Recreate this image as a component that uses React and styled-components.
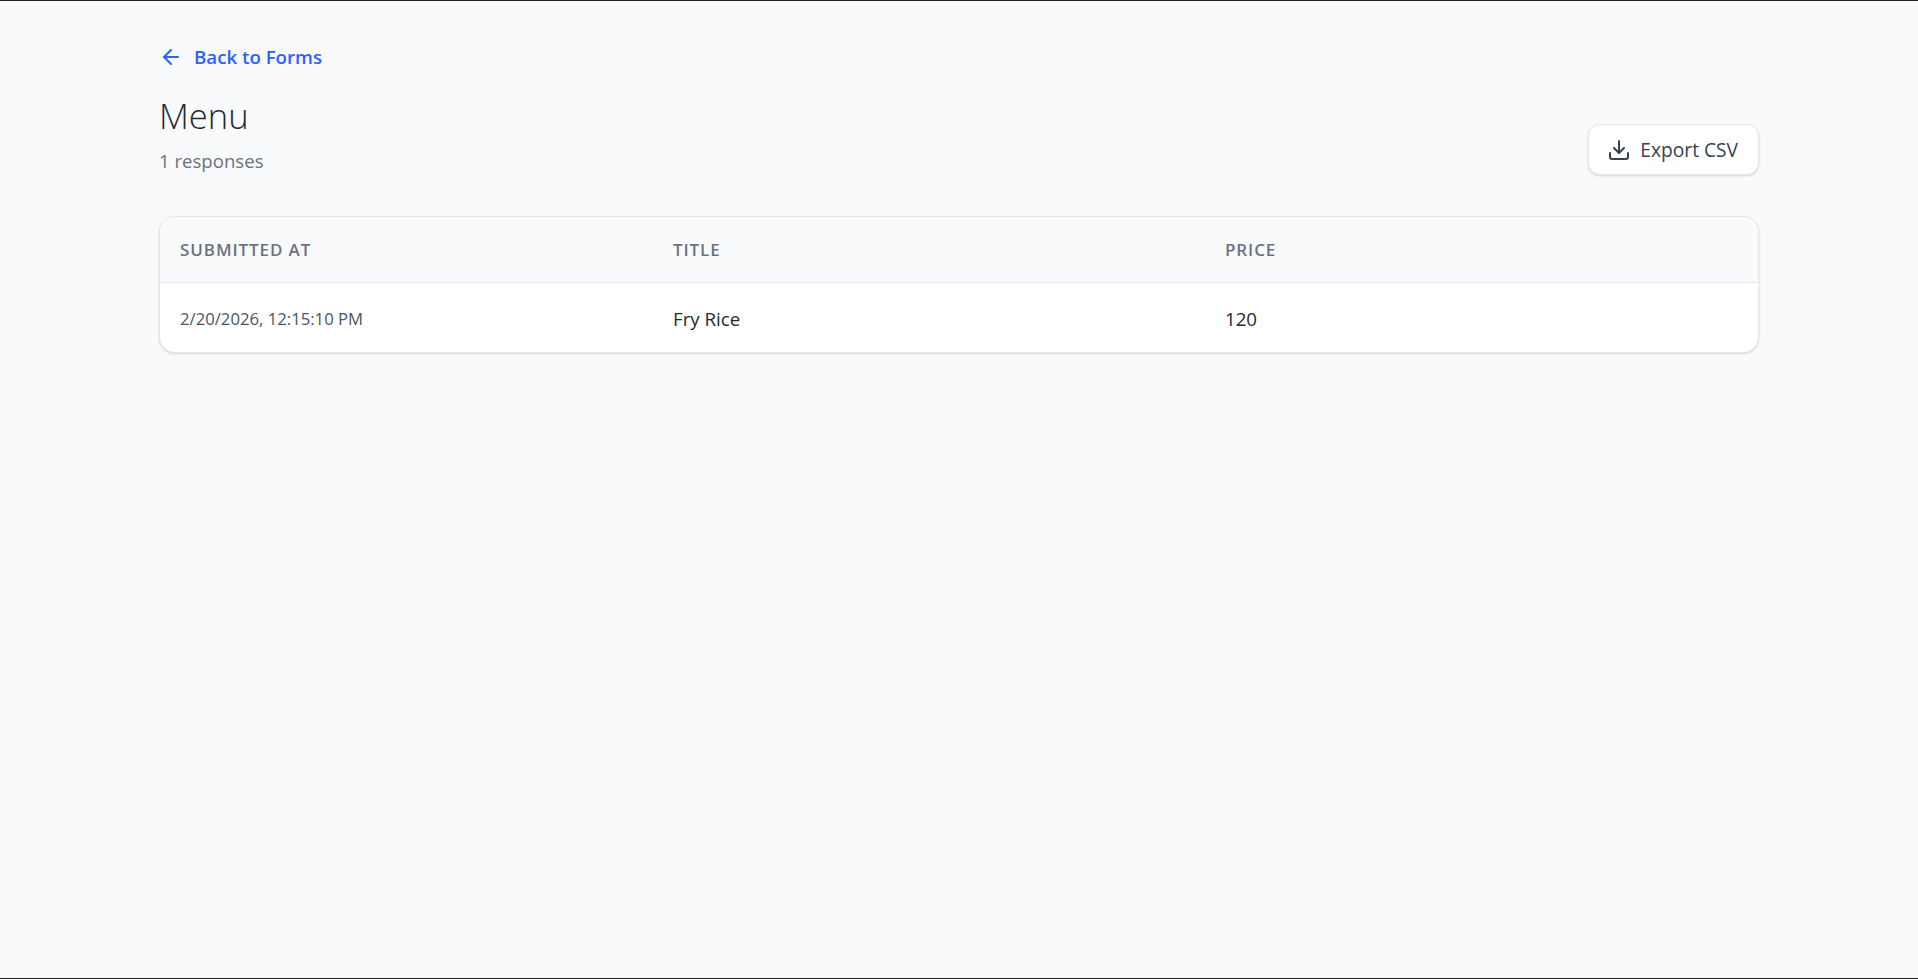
import React from "react";
import styled, { createGlobalStyle } from "styled-components";
import { ArrowLeft, Download } from "lucide-react";

const GlobalStyle = createGlobalStyle`
  html, body {
    margin: 0;
    padding: 0;
    background: #f9fafb;
  }
  * {
    box-sizing: border-box;
  }
`;

const Page = styled.div`
  height: 979px;
  overflow: hidden;
  background: #f9fafb;
  border-top: 1px solid #1f1f1f;
  border-bottom: 1px solid #1f1f1f;
  font-family: "Open Sans", "Noto Sans", sans-serif;
`;

const Container = styled.main`
  width: 1600px;
  margin: 0 auto;
  padding-top: 43px;
`;

const BackLink = styled.a`
  display: inline-flex;
  align-items: center;
  gap: 11px;
  height: 26px;
  color: #2962ff;
  font-size: 18.7px;
  font-weight: 600;
  text-decoration: none;
`;

const BackLabel = styled.span`
  margin-bottom: 2px;
`;

const Header = styled.header`
  display: flex;
  align-items: flex-end;
  justify-content: space-between;
  margin-top: 22px;
`;

const Title = styled.h1`
  margin: 0;
  color: #1f2937;
  font-size: 34.6px;
  font-weight: 300;
  line-height: 40px;
`;

const Subtitle = styled.p`
  margin: 11px 0 0;
  color: #6b7280;
  font-size: 18.6px;
  line-height: 28px;
`;

const ExportButton = styled.button`
  display: flex;
  align-items: center;
  gap: 9px;
  height: 51px;
  padding: 0 20px 0 18px;
  background: #fff;
  border: 1px solid #e5e7eb;
  border-radius: 12px;
  box-shadow: 0 1px 3px rgba(0, 0, 0, 0.1), 0 1px 2px rgba(0, 0, 0, 0.06);
  color: #374151;
  font-family: inherit;
  font-size: 19.2px;
`;

const Card = styled.section`
  margin-top: 41px;
  background: #fff;
  border: 1px solid #e5e7eb;
  border-radius: 16px;
  box-shadow: 0 1px 3px rgba(0, 0, 0, 0.1), 0 1px 2px rgba(0, 0, 0, 0.06);
  overflow: hidden;
`;

const Table = styled.table`
  width: 100%;
  border-collapse: collapse;
  table-layout: fixed;
`;

const HeadRow = styled.tr`
  height: 65px;
  background: #f9fafb;
  border-bottom: 1px solid #e5e7eb;
`;

const HeadCell = styled.th`
  width: ${(props) => props.$width};
  padding: 0 20px;
  color: #6b7280;
  font-size: 17px;
  font-weight: 600;
  letter-spacing: 0.9px;
  text-align: left;
  text-transform: uppercase;
`;

const Row = styled.tr`
  height: 70px;
`;

const Cell = styled.td`
  padding: 2px 20px 0;
  color: ${(props) => (props.$muted ? "#4b5563" : "#1f2937")};
  font-size: ${(props) => (props.$muted ? "16.7px" : "18.7px")};
`;

export default function App() {
  return (
    <>
      <GlobalStyle />
      <Page>
        <Container>
          <BackLink href="#forms">
            <ArrowLeft size={24} strokeWidth={2} />
            <BackLabel>Back to Forms</BackLabel>
          </BackLink>
          <Header>
            <div>
              <Title>Menu</Title>
              <Subtitle>1 responses</Subtitle>
            </div>
            <ExportButton>
              <Download size={24} strokeWidth={2} />
              Export CSV
            </ExportButton>
          </Header>
          <Card>
            <Table>
              <thead>
                <HeadRow>
                  <HeadCell $width="493px">Submitted At</HeadCell>
                  <HeadCell $width="552px">Title</HeadCell>
                  <HeadCell>Price</HeadCell>
                </HeadRow>
              </thead>
              <tbody>
                <Row>
                  <Cell $muted>2/20/2026, 12:15:10 PM</Cell>
                  <Cell>Fry Rice</Cell>
                  <Cell>120</Cell>
                </Row>
              </tbody>
            </Table>
          </Card>
        </Container>
      </Page>
    </>
  );
}
